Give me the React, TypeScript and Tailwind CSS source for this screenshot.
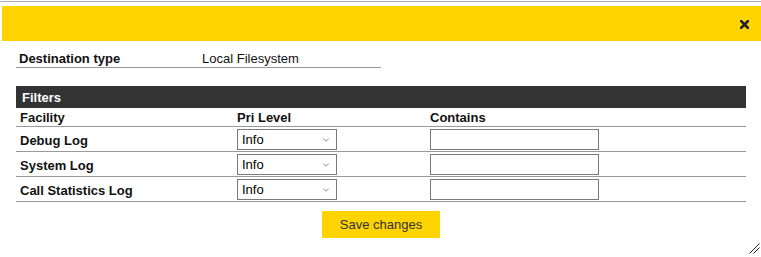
import { ChevronDown } from "lucide-react";

const rows = ["Debug Log", "System Log", "Call Statistics Log"];

function LevelSelect() {
  return (
    <div className="flex h-[21px] w-[100px] items-center justify-between border border-[#7a7a7a] bg-white pl-[4px] pr-[5px] text-[13px] leading-[15px] text-black">
      <span>Info</span>
      <ChevronDown className="h-[10px] w-[10px] text-[#444]" strokeWidth={1.5} />
    </div>
  );
}

export default function App() {
  return (
    <div className="relative h-[257px] w-[761px] overflow-hidden bg-white font-['Liberation_Sans',Arial,sans-serif] text-[13px] leading-[15px] text-[#111]">
      <div className="mt-px h-px bg-[#b0b0b0]" />
      <div className="ml-[2px] mt-[4px] flex h-[35px] items-center justify-end bg-[#ffd400] pr-[12px]">
        <svg width="9" height="9" viewBox="0 0 9 9" className="mt-[1px]">
          <path d="M1 1L8 8M8 1L1 8" stroke="#222" strokeWidth="2.6" strokeLinecap="square" />
        </svg>
      </div>

      <div className="mx-[16px]">
        <div className="mt-[10px] flex w-[365px] border-b border-[#999] pb-px">
          <div className="w-[186px] pl-[3px] font-bold">Destination type</div>
          <div>Local Filesystem</div>
        </div>

        <div className="mt-[18px] flex h-[22px] w-[730px] items-center bg-[#333] pl-[6px] pt-px font-bold text-white">
          Filters
        </div>

        <div className="w-[730px]">
          <div className="flex h-[19px] items-start border-b border-[#999] pt-[2px] font-bold">
            <div className="w-[221px] pl-[4px]">Facility</div>
            <div className="w-[193px]">Pri Level</div>
            <div>Contains</div>
          </div>
          {rows.map((r) => (
            <div key={r} className="flex h-[25px] items-center border-b border-[#999] pt-px">
              <div className="w-[221px] pl-[4px] pt-[2px] font-bold">{r}</div>
              <div className="w-[193px]">
                <LevelSelect />
              </div>
              <input
                type="text"
                className="h-[21px] w-[169px] border border-[#7a7a7a] bg-white outline-none"
              />
            </div>
          ))}
        </div>

        <div className="mt-[9px] flex w-[730px] justify-center">
          <button className="h-[27px] w-[118px] bg-[#ffd400] text-[13px] text-[#333]">
            Save changes
          </button>
        </div>
      </div>

      <svg width="12" height="12" viewBox="0 0 12 12" className="absolute bottom-[3px] right-[1px]">
        <path d="M11.5 1.5L1.5 11.5M11.5 5.5L5.5 11.5" stroke="#222" strokeWidth="1" />
      </svg>
    </div>
  );
}
